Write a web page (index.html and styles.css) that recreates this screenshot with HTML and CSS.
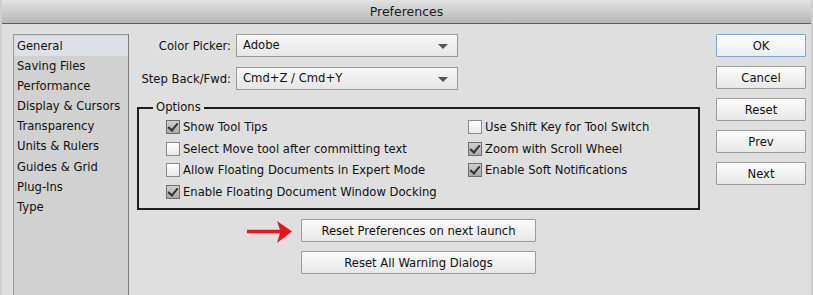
FILE: index.html
```html
<!DOCTYPE html>
<html lang="en">
<head>
    <meta charset="UTF-8">
    <meta name="viewport" content="width=device-width, initial-scale=1.0">
    <title>Preferences</title>
    <link rel="stylesheet" href="styles.css">
</head>
<body>
    <div class="window">
        <div class="titlebar">Preferences</div>

        <div class="content">
            <ul class="sidebar">
                <li class="selected">General</li>
                <li>Saving Files</li>
                <li>Performance</li>
                <li>Display &amp; Cursors</li>
                <li>Transparency</li>
                <li>Units &amp; Rulers</li>
                <li>Guides &amp; Grid</li>
                <li>Plug-Ins</li>
                <li>Type</li>
            </ul>

            <div class="main">
                <div class="field">
                    <label>Color Picker:</label>
                    <div class="select">Adobe<span class="caret"></span></div>
                </div>
                <div class="field">
                    <label>Step Back/Fwd:</label>
                    <div class="select">Cmd+Z / Cmd+Y<span class="caret"></span></div>
                </div>

                <div class="options">
                    <span class="legend">Options</span>
                    <div class="col">
                        <div class="check"><span class="box on"></span>Show Tool Tips</div>
                        <div class="check"><span class="box"></span>Select Move tool after committing text</div>
                        <div class="check"><span class="box"></span>Allow Floating Documents in Expert Mode</div>
                        <div class="check"><span class="box on"></span>Enable Floating Document Window Docking</div>
                    </div>
                    <div class="col">
                        <div class="check"><span class="box"></span>Use Shift Key for Tool Switch</div>
                        <div class="check"><span class="box on"></span>Zoom with Scroll Wheel</div>
                        <div class="check"><span class="box on"></span>Enable Soft Notifications</div>
                    </div>
                </div>

                <div class="resets">
                    <div class="reset-row">
                        <svg class="arrow" width="46" height="26" viewBox="0 0 46 26">
                            <path d="M0 12.5 H34" stroke="#e8151b" stroke-width="3.6" fill="none"/>
                            <path d="M30 2 L45 12.5 L30 24 L33.5 12.5 Z" fill="#e8151b"/>
                        </svg>
                        <button class="btn wide">Reset Preferences on next launch</button>
                    </div>
                    <button class="btn wide">Reset All Warning Dialogs</button>
                </div>
            </div>

            <div class="actions">
                <button class="btn default">OK</button>
                <button class="btn">Cancel</button>
                <button class="btn">Reset</button>
                <button class="btn">Prev</button>
                <button class="btn">Next</button>
            </div>
        </div>
    </div>
</body>
</html>
```

FILE: styles.css
```css
body {
    margin: 0;
    padding: 0;
    font-family: "DejaVu Sans", Arial, sans-serif;
    font-size: 11.6px;
    color: #111;
    background-color: #dfdfdf;
    overflow: hidden;
}

.window {
    width: 813px;
    height: 295px;
    box-sizing: border-box;
    border-left: 2px solid #cfcfcf;
    border-right: 2px solid #cfcfcf;
    background-color: #dfdfdf;
    white-space: nowrap;
}

.titlebar {
    height: 23px;
    line-height: 24px;
    text-align: center;
    font-size: 12.5px;
    color: #1a1a1a;
    background: linear-gradient(#e2e2e2, #b6b6b6);
    border-bottom: 1px solid #5e5e5e;
}

.content {
    display: flex;
    padding: 10px 0 0 11px;
}

.sidebar {
    list-style: none;
    margin: 0;
    padding: 1px 0 0;
    width: 114px;
    height: 270px;
    background-color: #d1d1d1;
    border: 1px solid #9c9c9c;
    border-right-color: #7d7d7d;
}

.sidebar li {
    height: 20.1px;
    line-height: 20px;
    padding-left: 3px;
}

.sidebar li.selected {
    background-color: #dde1e7;
}

.main {
    position: relative;
    width: 563px;
    margin-left: 8px;
}

.field {
    display: flex;
    align-items: center;
    margin-bottom: 10px;
}

.field label {
    width: 94px;
    text-align: right;
    margin-right: 5px;
}

.select {
    position: relative;
    width: 214px;
    height: 21px;
    line-height: 21px;
    padding-left: 6px;
    border: 1px solid #9a9a9a;
    background: linear-gradient(#f7f7f7, #e6e6e6);
}

.caret {
    position: absolute;
    right: 9px;
    top: 9px;
    border-left: 5px solid transparent;
    border-right: 5px solid transparent;
    border-top: 5px solid #555;
}

.options {
    position: relative;
    display: flex;
    margin-top: 17px;
    height: 92px;
    padding: 7px 0 0 27px;
    border: 2px solid #1e1e1e;
    width: 532px;
}

.legend {
    position: absolute;
    left: 14px;
    top: -9px;
    padding: 0 3px;
    line-height: 15px;
    background-color: #dfdfdf;
}

.col {
    width: 302px;
}

.col + .col {
    width: auto;
}

.check {
    display: flex;
    align-items: center;
    height: 21.7px;
}

.box {
    width: 12px;
    height: 12px;
    margin-right: 3px;
    border: 1px solid #8a8a8a;
    background: linear-gradient(#ffffff, #e9e9e9);
    position: relative;
}

.box.on {
    background: linear-gradient(#cfcfcf, #a9a9a9);
    border-color: #6e6e6e;
}

.box.on::after {
    content: "";
    position: absolute;
    left: 3px;
    top: 0px;
    width: 4px;
    height: 8px;
    border-right: 2px solid #333;
    border-bottom: 2px solid #333;
    transform: rotate(40deg);
}

.resets {
    display: flex;
    flex-direction: column;
    align-items: center;
    gap: 9px;
    margin-top: 9px;
}

.reset-row {
    position: relative;
}

.arrow {
    position: absolute;
    left: -54px;
    top: 0;
}

.btn {
    display: block;
    height: 23px;
    padding: 0;
    font-family: "DejaVu Sans", Arial, sans-serif;
    font-size: 11.6px;
    color: #111;
    border: 1px solid #9b9b9b;
    background: linear-gradient(#fbfbfb, #e8e8e8);
    border-radius: 1px;
}

.btn.wide {
    width: 235px;
}

.actions {
    display: flex;
    flex-direction: column;
    gap: 9px;
    margin-left: 16px;
}

.actions .btn {
    width: 90px;
}

.btn.default {
    border-color: #7aa6d6;
    background: linear-gradient(#fdfdfd, #eaeef3);
}
```
